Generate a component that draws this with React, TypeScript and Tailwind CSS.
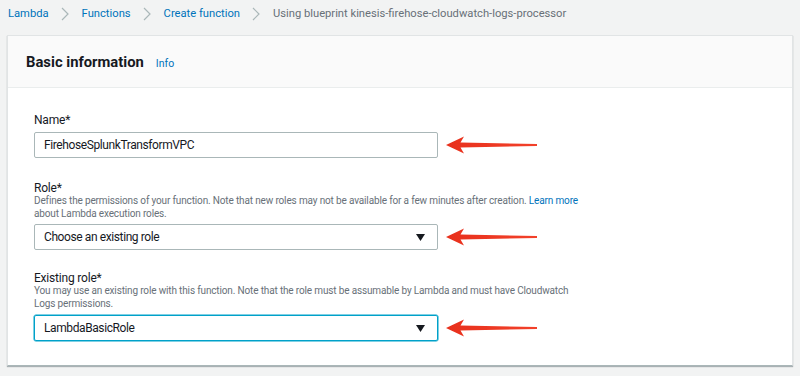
import React from "react";

function Chevron() {
  return (
    <svg width="8" height="14" viewBox="0 0 8 14" className="mx-[12.5px]">
      <polyline points="1,1 7,7 1,13" fill="none" stroke="#aab7b8" strokeWidth="1.2" />
    </svg>
  );
}

function Arrow() {
  return (
    <svg width="94" height="20" viewBox="0 0 94 20" className="ml-[7px] shrink-0">
      <defs>
        <linearGradient id="ag" x1="0" y1="0" x2="1" y2="0">
          <stop offset="0" stopColor="#e8301c" />
          <stop offset="1" stopColor="#f2412a" />
        </linearGradient>
      </defs>
      <path d="M1,10 L19,1.5 L15.5,7.5 L92,9 L92,11 L15.5,12.5 L19,18.5 Z" fill="url(#ag)" />
    </svg>
  );
}

function Caret() {
  return (
    <svg width="9" height="7" viewBox="0 0 9 7">
      <path d="M0,0 L9,0 L4.5,7 Z" fill="#16191f" />
    </svg>
  );
}

export default function App() {
  return (
    <div className="w-[800px] h-[376px] overflow-hidden bg-[#f2f3f3] font-['Roboto',sans-serif]">
      <div className="h-[35px] flex items-center pl-[8px] pb-[7px] text-[11.2px] leading-[14px]">
        <span className="text-[#0073bb]">Lambda</span>
        <Chevron />
        <span className="text-[#0073bb]">Functions</span>
        <Chevron />
        <span className="text-[#0073bb]">Create function</span>
        <Chevron />
        <span className="text-[#687078]">Using blueprint kinesis-firehose-cloudwatch-logs-processor</span>
      </div>
      <div className="ml-[7px] w-[786px] h-[331px] bg-white border border-[#e1e4e5] border-b-[#aab7b8] shadow-[0_1px_1px_rgba(0,28,36,0.3)]">
        <div className="h-[52px] bg-[#fafafa] border-b border-[#eaeded] flex items-center pl-[18px] pt-[2px]">
          <span className="text-[14.8px] font-bold text-[#16191f]">Basic information</span>
          <span className="ml-[12px] text-[10.5px] text-[#0073bb] pt-[2px]">Info</span>
        </div>
        <div className="pl-[26px] pt-[24px]">
          <div className="text-[12px] tracking-[-0.2px] leading-[16px] text-[#16191f]">Name*</div>
          <div className="mt-[4px] flex items-center">
            <div className="w-[404px] h-[26px] border border-[#aab7b8] rounded-[2px] flex items-center pl-[9px] text-[12px] tracking-[-0.4px] text-[#16191f]">
              FirehoseSplunkTransformVPC
            </div>
            <Arrow />
          </div>

          <div className="mt-[22px] text-[12px] tracking-[-0.2px] leading-[16px] text-[#16191f]">Role*</div>
          <div className="-mt-[2px] whitespace-nowrap text-[10px] tracking-[-0.15px] leading-[13px] text-[#687078]">
            Defines the permissions of your function. Note that new roles may not be available for a few minutes after creation.{" "}
            <span className="text-[#0073bb]">Learn more</span>
            <br />
            about Lambda execution roles.
          </div>
          <div className="mt-[4px] flex items-center">
            <div className="w-[404px] h-[26px] border border-[#aab7b8] rounded-[2px] flex items-center justify-between pl-[9px] pr-[12px] text-[12px] tracking-[-0.4px] text-[#16191f]">
              <span>Choose an existing role</span>
              <Caret />
            </div>
            <Arrow />
          </div>

          <div className="mt-[20px] text-[12px] tracking-[-0.2px] leading-[16px] text-[#16191f]">Existing role*</div>
          <div className="-mt-[2px] whitespace-nowrap text-[10px] tracking-[-0.15px] leading-[13px] text-[#687078]">
            You may use an existing role with this function. Note that the role must be assumable by Lambda and must have Cloudwatch
            <br />
            Logs permissions.
          </div>
          <div className="mt-[5px] flex items-center">
            <div className="w-[404px] h-[26px] border border-[#00a1c9] shadow-[0_0_0_0.5px_#00a1c9] rounded-[2px] flex items-center justify-between pl-[9px] pr-[12px] text-[12px] tracking-[-0.4px] text-[#16191f]">
              <span>LambdaBasicRole</span>
              <Caret />
            </div>
            <Arrow />
          </div>
        </div>
      </div>
    </div>
  );
}
